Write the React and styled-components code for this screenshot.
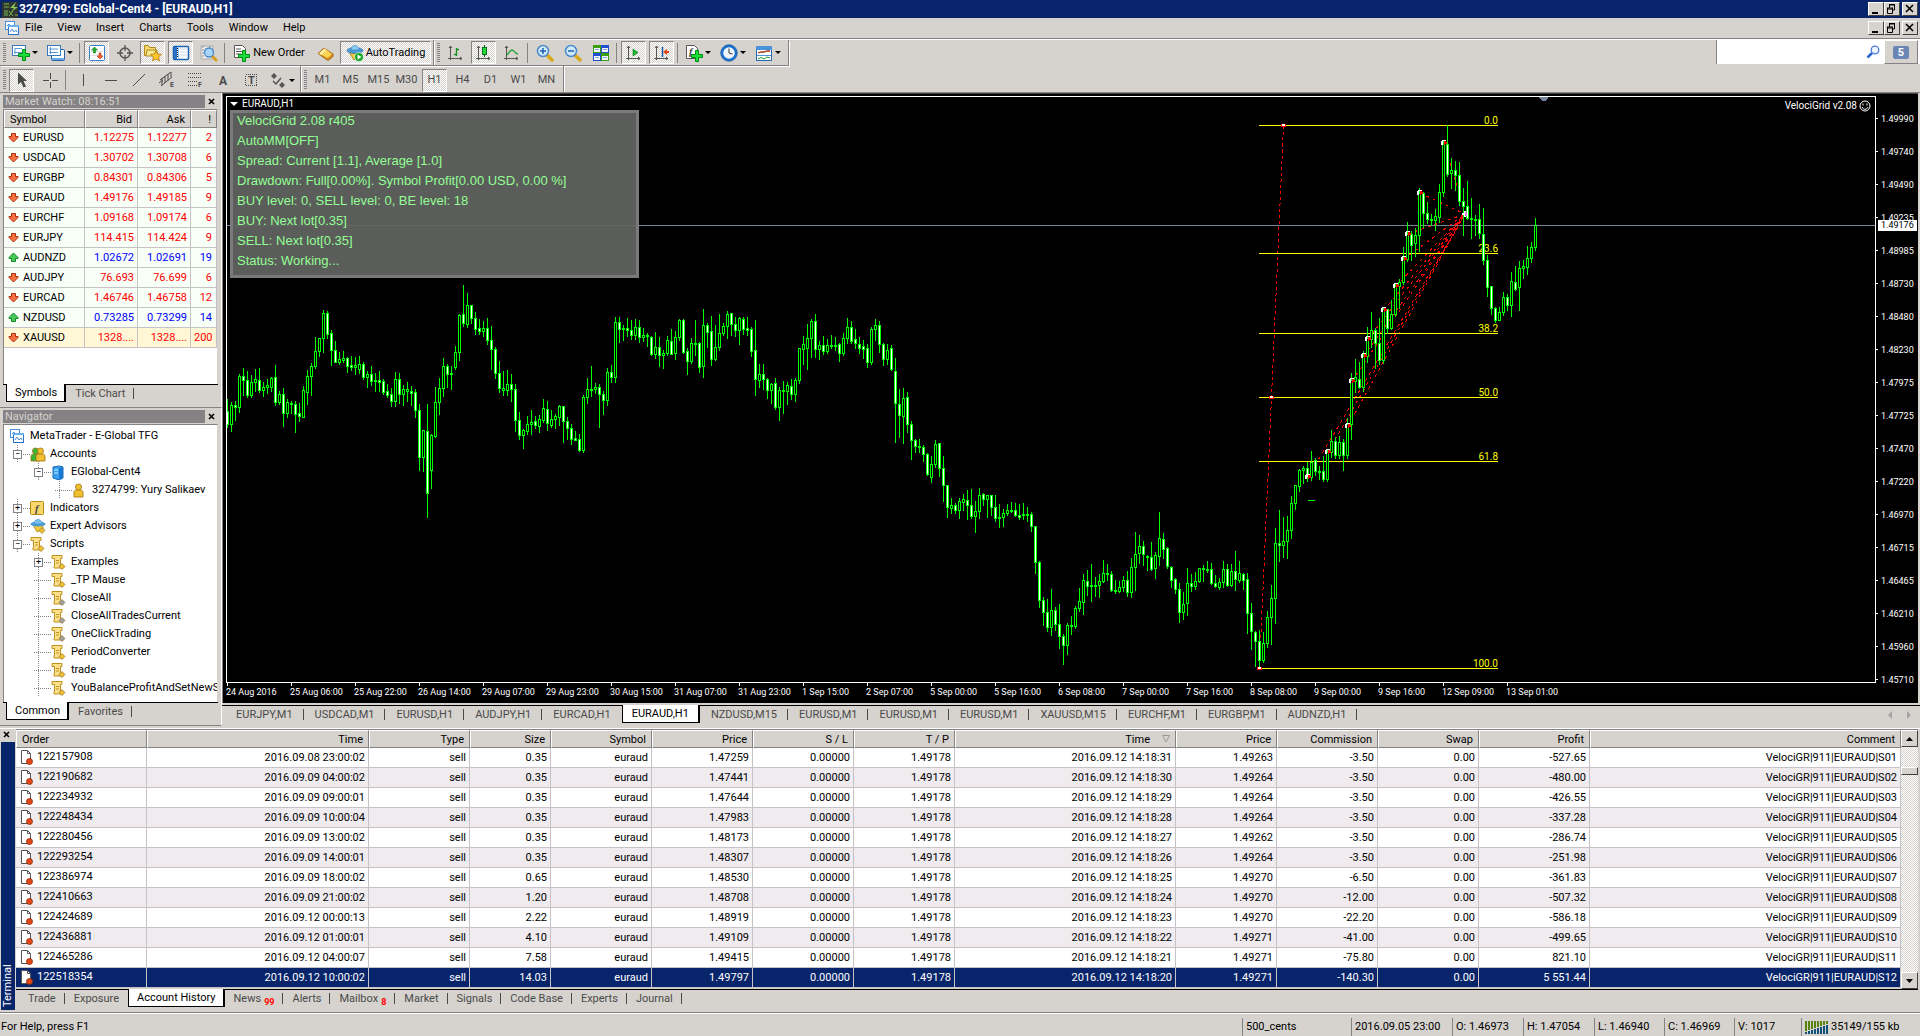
import React from "react";
import styled, { createGlobalStyle, css } from "styled-components";

const colors = {
  face: "#d6d3ce",
  shadow: "#848284",
  dark: "#424142",
  navy: "#08246b",
  lime: "#00ff00",
  line: "#c6c3c6",
  muted: "#4a4a4a",
};

const PRICES = [
  "1.49990", "1.49740", "1.49490", "1.49235", "1.48985", "1.48730",
  "1.48480", "1.48230", "1.47975", "1.47725", "1.47470", "1.47220",
  "1.46970", "1.46715", "1.46465", "1.46210", "1.45960", "1.45710",
];

const TIMES = [
  "24 Aug 2016", "25 Aug 06:00", "25 Aug 22:00", "26 Aug 14:00",
  "29 Aug 07:00", "29 Aug 23:00", "30 Aug 15:00", "31 Aug 07:00",
  "31 Aug 23:00", "1 Sep 15:00", "2 Sep 07:00", "5 Sep 00:00",
  "5 Sep 16:00", "6 Sep 08:00", "7 Sep 00:00", "7 Sep 16:00",
  "8 Sep 08:00", "9 Sep 00:00", "9 Sep 16:00", "12 Sep 09:00",
  "13 Sep 01:00",
];

// high, body top, body bottom, low, d = bearish / u = bullish
const CANDLES = `
399 411 424 427 d,402 405 424 431 u,401 405 407 420 d,374 376 407 412 u,368 376 380 395 d,371 380 395 397 d,
375 382 395 397 u,369 379 382 391 u,368 380 390 392 d,382 387 390 396 u,379 385 387 393 u,377 378 387 391 u,
365 377 402 405 d,391 394 402 404 u,388 394 413 426 d,399 402 413 417 u,401 403 404 413 u,401 404 414 432 d,
403 413 416 421 d,386 390 417 417 u,370 376 392 404 u,363 366 376 395 u,337 351 366 368 u,338 338 351 356 u,
310 313 338 352 u,311 313 334 338 d,330 333 350 365 d,341 350 362 362 d,352 359 362 364 u,351 358 360 362 u,
357 358 366 372 d,356 365 367 370 d,357 365 367 374 u,356 364 369 373 u,362 364 377 379 d,371 374 377 387 u,
366 374 381 385 d,373 380 381 391 d,371 380 382 391 d,379 381 392 394 d,384 391 395 397 d,388 394 401 406 d,
372 379 401 406 u,373 379 394 403 d,385 389 394 405 u,382 389 391 401 u,386 391 393 405 d,389 392 410 417 d,
404 410 457 470 d,430 430 457 471 u,404 431 493 517 d,434 435 470 488 u,387 402 436 437 u,378 388 402 414 u,
358 366 388 396 u,364 366 374 387 d,366 373 374 389 d,346 352 367 369 u,314 315 352 360 u,285 314 323 326 d,
293 305 324 327 u,305 305 318 323 d,312 318 329 334 d,319 328 331 334 d,321 328 331 336 u,318 328 340 344 d,
326 340 349 369 d,347 349 373 378 d,361 373 388 392 d,371 388 390 395 u,370 384 390 395 u,374 384 389 401 d,
384 389 420 431 d,412 420 435 439 d,429 430 435 448 u,416 424 431 434 u,410 422 424 434 u,416 421 425 428 d,
415 419 426 432 u,399 408 420 422 u,401 409 423 430 d,410 419 425 427 u,414 416 419 428 u,405 406 417 425 u,
406 406 421 442 d,417 421 428 439 d,424 428 439 444 d,431 438 440 440 d,434 439 450 451 d,395 397 450 452 u,
378 389 397 403 u,366 389 390 396 u,383 387 389 393 u,384 387 394 427 d,391 394 400 414 d,368 372 400 405 u,
365 372 377 382 d,317 322 377 382 u,317 322 329 342 d,325 328 329 340 d,318 328 330 336 d,320 330 335 339 d,
319 327 335 339 u,320 327 337 342 d,328 335 337 341 u,333 335 336 346 u,336 337 354 355 d,332 347 354 358 u,
337 347 355 366 d,350 353 355 368 u,336 340 353 355 u,329 341 354 354 d,331 337 353 359 u,319 320 337 340 u,
319 320 352 353 d,348 351 361 374 d,338 343 361 363 u,320 343 344 355 u,342 343 367 372 d,309 325 366 377 u,
323 325 332 347 d,316 331 359 365 d,325 347 359 360 u,314 333 347 350 u,323 326 333 335 u,311 314 326 338 u,
313 313 324 335 d,317 324 330 336 d,317 318 330 344 u,317 319 329 334 d,317 328 330 335 d,327 329 351 356 d,
320 350 379 395 d,364 374 380 387 u,364 374 379 389 d,378 379 390 398 d,383 384 390 403 u,378 383 407 409 d,
387 390 407 420 u,381 390 391 413 u,382 385 391 404 u,379 386 394 399 d,378 380 394 401 u,348 348 380 383 u,
336 344 349 364 u,324 338 348 369 u,319 321 338 357 u,314 321 349 357 d,341 345 349 359 u,336 345 351 354 d,
339 345 351 353 u,335 345 346 348 u,337 345 346 350 d,343 344 353 361 d,333 338 353 355 u,318 327 338 343 u,
321 327 341 343 d,329 339 343 348 d,337 344 348 353 d,340 346 349 358 d,344 348 362 367 d,327 329 362 364 u,
319 325 329 340 u,321 325 344 352 d,343 344 359 365 d,344 350 359 364 u,345 348 369 370 d,358 371 403 442 d,
389 404 415 437 d,388 398 416 443 u,392 397 424 432 d,421 424 440 459 d,439 440 446 452 d,439 446 447 452 d,
445 447 454 461 d,453 454 474 475 d,456 464 477 482 u,440 444 464 467 u,443 443 468 476 d,456 468 485 501 d,
485 485 507 517 d,498 505 508 513 u,503 505 510 513 d,498 501 510 518 u,494 499 502 510 u,490 500 505 519 d,
489 505 516 518 d,501 511 516 532 u,488 495 511 518 u,493 494 499 505 d,495 495 499 517 u,495 495 507 515 d,
495 507 518 521 d,504 517 518 527 d,509 513 517 526 u,504 510 513 515 u,502 510 511 512 u,503 510 515 516 d,
504 515 517 519 d,503 514 515 519 u,507 514 515 521 d,512 514 526 531 d,526 526 562 573 d,561 562 600 607 d,
597 600 612 625 d,599 612 627 631 d,589 610 627 635 u,607 610 624 630 d,604 624 636 648 d,634 636 645 664 d,
623 625 645 654 u,616 625 626 634 u,606 608 626 628 u,588 601 608 611 u,574 580 602 614 u,570 581 586 595 d,
564 585 586 601 u,577 585 586 596 u,574 581 585 597 u,560 573 581 582 u,564 573 574 580 d,571 574 590 591 d,
580 590 591 593 d,581 587 591 592 u,576 580 587 591 u,571 580 592 596 d,558 567 592 597 u,532 554 567 590 u,
535 546 553 563 u,541 546 554 565 d,555 556 557 570 d,542 557 569 570 d,552 555 568 578 u,512 538 556 565 u,
533 539 549 558 d,547 548 566 568 d,566 567 580 587 d,578 579 589 593 d,583 589 612 622 d,592 604 612 619 u,
568 583 603 615 u,574 583 586 591 d,572 581 586 589 u,568 568 581 582 u,565 568 569 581 u,561 569 570 572 d,
563 569 583 584 d,575 583 586 587 d,578 582 587 589 u,561 569 582 587 u,564 569 585 586 d,564 571 585 586 u,
551 571 579 590 d,561 573 580 582 u,573 574 580 589 d,573 579 613 633 d,603 613 631 649 d,631 632 641 666 d,
630 641 660 669 d,632 643 660 662 u,611 617 643 647 u,585 598 617 644 u,528 543 598 623 u,510 543 545 561 d,
517 541 545 557 u,516 530 541 558 u,496 503 530 538 u,485 485 503 509 u,469 470 486 491 u,466 468 470 483 u,
462 468 477 481 d,451 462 477 480 u,458 460 471 475 d,466 471 472 479 d,456 471 479 481 d,449 452 479 481 u,
430 441 452 457 u,437 441 455 458 d,436 442 455 458 u,439 442 455 470 d,418 424 455 458 u,373 380 424 439 u,
359 377 381 392 u,362 379 387 388 d,351 356 387 391 u,327 338 356 362 u,312 330 339 347 u,328 330 343 368 d,
318 343 360 364 d,308 309 360 363 u,309 309 328 333 d,300 314 328 329 u,283 286 314 316 u,279 282 286 308 u,
247 259 282 284 u,222 234 259 261 u,231 234 245 260 d,228 235 243 256 u,188 193 235 251 u,192 193 213 227 d,
202 213 219 223 d,214 219 220 225 d,209 216 220 230 u,184 192 217 222 u,141 144 192 196 u,125 144 174 176 d,
158 170 173 188 u,161 170 175 190 d,162 175 201 205 d,188 201 206 235 d,181 206 218 219 d,198 218 219 238 d,
215 219 220 235 d,204 219 233 238 d,208 234 260 264 d,255 260 287 296 d,286 286 308 314 d,307 308 320 322 d,
307 312 320 320 u,292 297 312 315 u,294 297 305 310 d,272 281 305 316 u,266 282 289 290 d,261 268 287 310 u,
260 266 268 278 u,246 258 267 274 u,242 247 258 262 u,218 225 247 250 u`
  .trim()
  .split(",")
  .map((c) => c.trim().split(" "))
  .map(([h, t, b, l, dir]) => ({ h: +h, t: +t, b: +b, l: +l, down: dir === "d" }));

const FIBO = [
  [125, "0.0"],
  [253, "23.6"],
  [333, "38.2"],
  [397, "50.0"],
  [461, "61.8"],
  [668, "100.0"],
];

const ENTRIES = [
  [1444, 143], [1420, 193], [1408, 234], [1404, 259], [1396, 286], [1384, 310],
  [1368, 339], [1364, 356], [1352, 381], [1348, 426], [1328, 452], [1308, 477],
];

const QUOTES = [
  ["EURUSD", "1.12275", "1.12277", "2"],
  ["USDCAD", "1.30702", "1.30708", "6"],
  ["EURGBP", "0.84301", "0.84306", "5"],
  ["EURAUD", "1.49176", "1.49185", "9"],
  ["EURCHF", "1.09168", "1.09174", "6"],
  ["EURJPY", "114.415", "114.424", "9"],
  ["AUDNZD", "1.02672", "1.02691", "19", true],
  ["AUDJPY", "76.693", "76.699", "6"],
  ["EURCAD", "1.46746", "1.46758", "12"],
  ["NZDUSD", "0.73285", "0.73299", "14", true],
  ["XAUUSD", "1328....", "1328....", "200"],
];

const ORDERS = [
  ["122157908", "2016.09.08 23:00:02", "0.35", "1.47259", "31", "1.49263", "-3.50", "-527.65"],
  ["122190682", "2016.09.09 04:00:02", "0.35", "1.47441", "30", "1.49264", "-3.50", "-480.00"],
  ["122234932", "2016.09.09 09:00:01", "0.35", "1.47644", "29", "1.49264", "-3.50", "-426.55"],
  ["122248434", "2016.09.09 10:00:04", "0.35", "1.47983", "28", "1.49264", "-3.50", "-337.28"],
  ["122280456", "2016.09.09 13:00:02", "0.35", "1.48173", "27", "1.49262", "-3.50", "-286.74"],
  ["122293254", "2016.09.09 14:00:01", "0.35", "1.48307", "26", "1.49264", "-3.50", "-251.98"],
  ["122386974", "2016.09.09 18:00:02", "0.65", "1.48530", "25", "1.49270", "-6.50", "-361.83"],
  ["122410663", "2016.09.09 21:00:02", "1.20", "1.48708", "24", "1.49270", "-12.00", "-507.32"],
  ["122424689", "2016.09.12 00:00:13", "2.22", "1.48919", "23", "1.49270", "-22.20", "-586.18"],
  ["122436881", "2016.09.12 01:00:01", "4.10", "1.49109", "22", "1.49271", "-41.00", "-499.65"],
  ["122465286", "2016.09.12 04:00:07", "7.58", "1.49415", "21", "1.49271", "-75.80", "821.10"],
  ["122518354", "2016.09.12 10:00:02", "14.03", "1.49797", "20", "1.49271", "-140.30", "5 551.44"],
];

const ORDER_COLUMNS = [
  ["Order", 131], ["Time", 222], ["Type", 101], ["Size", 81], ["Symbol", 101],
  ["Price", 101], ["S / L", 101], ["T / P", 101], ["Time", 221], ["Price", 101],
  ["Commission", 101], ["Swap", 101], ["Profit", 111], ["Comment", null],
];

const CHART_TABS = [
  "EURJPY,M1", "USDCAD,M1", "EURUSD,H1", "AUDJPY,H1", "EURCAD,H1", "EURAUD,H1",
  "NZDUSD,M15", "EURUSD,M1", "EURUSD,M1", "EURUSD,M1", "XAUUSD,M15", "EURCHF,M1",
  "EURGBP,M1", "AUDNZD,H1",
];

const TERMINAL_TABS = [
  ["Trade"], ["Exposure"], ["Account History"], ["News", "99"], ["Alerts"],
  ["Mailbox", "8"], ["Market"], ["Signals"], ["Code Base"], ["Experts"], ["Journal"],
];

const INFO_LINES = [
  "VelociGrid 2.08 r405",
  "AutoMM[OFF]",
  "Spread: Current [1.1], Average [1.0]",
  "Drawdown: Full[0.00%]. Symbol Profit[0.00 USD, 0.00 %]",
  "BUY level: 0, SELL level: 0, BE level: 18",
  "BUY: Next lot[0.35]",
  "SELL: Next lot[0.35]",
  "Status: Working...",
];

/* ---------- icons ---------- */

function Svg({ w = 18, h = 18, children }) {
  return (
    <svg width={w} height={h} viewBox={`0 0 ${w} ${h}`} aria-hidden="true">
      {children}
    </svg>
  );
}

const Plus = ({ x = 0, y = 0 }) => (
  <path
    transform={`translate(${x} ${y})`}
    d="M4.5.5h3v4h4v3h-4v4h-3v-4h-4v-3h4z"
    fill="#18e038"
    stroke="#008a10"
  />
);

const Axes = () => (
  <path d="M3.5 2v14M1 14.5h14M2 4l1.500-2 1.500 2M13 13l2 1.500-2 1.500" fill="none" stroke="#555" />
);

const icons = {
  newChart: (
    <Svg>
      <rect x=".5" y="1.500" width="13" height="10" fill="#fff" stroke="#3a7ab8" />
      <path d="M3 4v6M2 8.500h9M3 4.500h7" stroke="#5a9ad8" />
      <Plus x={6} y={5} />
    </Svg>
  ),
  profiles: (
    <Svg>
      <rect x="4.500" y="5.500" width="13" height="11" rx="1" fill="#fff" stroke="#2a62a8" />
      <path d="M5 14h12v2H5z" fill="#6aa8e8" />
      <rect x=".5" y="1.500" width="13" height="10" fill="#fff" stroke="#3a7ab8" />
      <path d="M3.500 3v7M2 8.500h9M2 5h9" stroke="#5a9ad8" />
    </Svg>
  ),
  marketWatch: (
    <Svg>
      <rect x="1.500" y="1.500" width="15" height="15" rx="1" fill="#fff" stroke="#3a80c8" />
      <path d="M3 7.500h12M3 11.500h12" stroke="#ddd" />
      <path d="M6.500 3l3 3H7.500v3h-2V6h-2z" fill="#20b030" stroke="#108018" strokeWidth=".6" />
      <path d="M12 15l-3-3h2V9h2v3h2z" fill="#f06030" stroke="#b83010" strokeWidth=".6" />
    </Svg>
  ),
  target: (
    <Svg>
      <circle cx="9" cy="9" r="5" fill="none" stroke="#555" strokeWidth="1.500" />
      <path d="M9 1v6M9 11v6M1 9h6M11 9h6" stroke="#555" strokeWidth="1.300" />
    </Svg>
  ),
  favorites: (
    <Svg>
      <path d="M.5 11.500V1.500h4l1 2h6v8z" fill="#f4d868" stroke="#b08820" />
      <path d="M3 6h10v6H2z" fill="#fae890" stroke="#b08820" />
      <path
        d="M12 6.500l1.600 3.500 3.900.4-2.900 2.600.9 3.900-3.500-2-3.500 2 .9-3.900-2.900-2.600 3.900-.4z"
        fill="#ffc828"
        stroke="#b07810"
        strokeWidth=".8"
      />
    </Svg>
  ),
  dataWindow: (
    <Svg>
      <rect x="1.500" y="2.500" width="15" height="13" rx="1" fill="#fff" stroke="#1a62b8" strokeWidth="1.500" />
      <path d="M2 3h3v12H2z" fill="#2a72c8" />
      <path d="M5.500 4v10" stroke="#222" strokeDasharray="1 1" />
      <path d="M6 3h1v12H6z" fill="#9ac8f4" />
      <path d="M8 5h7M8 8h7M8 11h7" stroke="#ccd8e8" />
    </Svg>
  ),
  tester: (
    <Svg>
      <path d="M1 2h12v13H1z" fill="#f0f0f0" stroke="#aaa" />
      <path d="M3 2v11M6 4v8M10 2v4" stroke="#888" strokeDasharray="2 1" />
      <path d="M12 12l4 4" stroke="#d8a018" strokeWidth="3" strokeLinecap="round" />
      <circle cx="9" cy="8.500" r="4.500" fill="#a8d4f8" stroke="#4a8ac8" strokeWidth="1.300" />
    </Svg>
  ),
  newOrder: (
    <Svg>
      <path d="M1.500 1.500h8l3 3v9h-11z" fill="#fff" stroke="#555" />
      <path d="M3 5h5M3 7.500h7M3 10h5" stroke="#555" />
      <Plus x={5} y={6} />
    </Svg>
  ),
  gold: (
    <Svg>
      <path d="M2 9.500L8 4l9 6v2.500l-5 4z" fill="#d89018" stroke="#905808" strokeWidth=".8" />
      <path d="M3 9.500L8.500 4.500l7.500 5.500-4.500 4z" fill="#fcd458" />
      <path d="M3 9.500L8.500 4.500l2 1.500L5 11z" fill="#fff0a8" />
    </Svg>
  ),
  autoTrading: (
    <Svg>
      <path d="M3 8l5 8 6-4-1-5z" fill="#f4c838" stroke="#a87810" strokeWidth=".8" />
      <ellipse cx="9" cy="6.500" rx="8" ry="3" fill="#4a9ad8" stroke="#2868a8" strokeWidth=".6" />
      <path d="M5 6c0-6 8-6 8 0z" fill="#8accf4" stroke="#3a80c0" strokeWidth=".6" />
      <circle cx="13" cy="13" r="4.500" fill="#18a828" stroke="#fff" strokeWidth=".6" />
      <path d="M11.500 10.500v5l4-2.500z" fill="#fff" />
    </Svg>
  ),
  bars: (
    <Svg>
      <Axes />
      <path d="M9.500 4v8M7 10.500h2.500M9.500 5.500H12" stroke="#109020" strokeWidth="1.300" fill="none" />
    </Svg>
  ),
  candles: (
    <Svg>
      <Axes />
      <path d="M9.500 1v12" stroke="#085810" />
      <rect x="7.500" y="3.500" width="4" height="7" fill="#20d838" stroke="#087018" />
    </Svg>
  ),
  lineChart: (
    <Svg>
      <Axes />
      <path d="M4 11c2-2 3-5 5-5s3 4 6 4" stroke="#20a030" strokeWidth="1.300" fill="none" />
    </Svg>
  ),
  zoomIn: (
    <Svg>
      <path d="M11 11l5 5" stroke="#d8a818" strokeWidth="3.500" strokeLinecap="round" />
      <circle cx="7" cy="7" r="5.500" fill="#d0eafc" stroke="#4a8ac8" strokeWidth="1.500" />
      <path d="M7 4v6M4 7h6" stroke="#1a62b0" strokeWidth="1.500" />
    </Svg>
  ),
  zoomOut: (
    <Svg>
      <path d="M11 11l5 5" stroke="#d8a818" strokeWidth="3.500" strokeLinecap="round" />
      <circle cx="7" cy="7" r="5.500" fill="#d0eafc" stroke="#4a8ac8" strokeWidth="1.500" />
      <path d="M4 7h6" stroke="#1a62b0" strokeWidth="1.500" />
    </Svg>
  ),
  tile: (
    <Svg>
      <path d="M1 1h8v8H1zM9 9h8v8H9z" fill="#3aa010" />
      <path d="M9 1h8v8H9zM1 9h8v8H1z" fill="#2050d0" />
      <path d="M2 4h6v4H2zM10 4h6v4h-6zM2 12h6v4H2zM10 12h6v4h-6z" fill="#f4f8ff" />
      <path d="M3 5.500h4M11 5.500h4M3 13.500h4M11 13.500h4" stroke="#88a8e0" />
    </Svg>
  ),
  autoScroll: (
    <Svg>
      <Axes />
      <path d="M8 5v7l5-3.500z" fill="#18b828" stroke="#087818" strokeWidth=".6" />
    </Svg>
  ),
  shift: (
    <Svg>
      <Axes />
      <path d="M9.500 3v10" stroke="#1858a0" strokeWidth="1.500" />
      <path d="M10 8l4-3v2h2v2h-2v2z" fill="#d84810" />
    </Svg>
  ),
  indicators: (
    <Svg>
      <path d="M1.500 1.500h8l3 3v10h-11z" fill="#fff" stroke="#555" />
      <IconText x="4" y="11" $size={11} $italic>f</IconText>
      <Plus x={6} y={6} />
    </Svg>
  ),
  clock: (
    <Svg>
      <circle cx="9" cy="9" r="7" fill="#eef6fc" stroke="#1a72d0" strokeWidth="2.500" />
      <circle cx="9" cy="9" r="8.300" fill="none" stroke="#0c4890" strokeWidth=".6" />
      <path d="M9 4.500V9l3.500 1" stroke="#333" fill="none" />
    </Svg>
  ),
  template: (
    <Svg>
      <rect x="1.500" y="2.500" width="15" height="14" fill="#fff" stroke="#2a6ab0" />
      <path d="M1 2h16v4H1z" fill="#4a92dc" />
      <path d="M3 9l3-1h3l3-1h3" stroke="#a03010" fill="none" strokeWidth="1.300" />
      <path d="M2 11.500h14" stroke="#4a92dc" />
      <path d="M3 15l3-1.500 3 1.500 3-2 3 1" stroke="#20a030" fill="none" />
    </Svg>
  ),
  cursor: (
    <Svg>
      <path d="M5 1.500v12l3-2.500 2.500 5.500 2.500-1-2.500-5.500H14z" fill="#4a4a4a" />
    </Svg>
  ),
  cross: (
    <Svg>
      <path d="M9.500 2v6M9.500 11v6M2 9.500h6M11 9.500h6" stroke="#4a4a4a" shapeRendering="crispEdges" />
    </Svg>
  ),
  vline: (
    <Svg>
      <path d="M9.500 3v12" stroke="#4a4a4a" shapeRendering="crispEdges" />
    </Svg>
  ),
  hline: (
    <Svg>
      <path d="M3 9.500h12" stroke="#4a4a4a" shapeRendering="crispEdges" />
    </Svg>
  ),
  trend: (
    <Svg>
      <path d="M3 15L15 3" stroke="#4a4a4a" />
    </Svg>
  ),
  channel: (
    <Svg>
      <path d="M2 9L13 1M3 15L14 6M4 7v7M7 5v7M10 3v7M1 12l4-3M13 1v5" stroke="#4a4a4a" />
      <IconText x="12" y="16" $size={7}>E</IconText>
    </Svg>
  ),
  fibo: (
    <Svg>
      <path d="M2 2.500h14M2 6.500h14M2 10.500h9M2 14.500h9" stroke="#4a4a4a" strokeDasharray="1 1" shapeRendering="crispEdges" />
      <IconText x="12" y="16" $size={7}>F</IconText>
    </Svg>
  ),
  text: (
    <Svg>
      <IconText x="5" y="14" $size={12}>A</IconText>
    </Svg>
  ),
  label: (
    <Svg>
      <rect x="3.500" y="3.500" width="11" height="11" fill="none" stroke="#4a4a4a" strokeDasharray="1 1" shapeRendering="crispEdges" />
      <IconText x="6" y="13" $size={11}>T</IconText>
    </Svg>
  ),
  arrows: (
    <Svg>
      <path d="M2 5l3-3 3 3-3 3zM10 14l3-3 3 3-3 3z" fill="#555" />
      <path d="M4 10l3 3 5-6" fill="none" stroke="#555" strokeWidth="1.500" />
    </Svg>
  ),
};

const ArrowIcon = ({ up }) => (
  <Svg w={11} h={11}>
    {up ? (
      <path d="M5.500 1L10 5.500v1H7.500V9.500h-4V6.500H1v-1z" fill="#48c858" stroke="#108828" />
    ) : (
      <path d="M5.500 10L1 5.500v-1h2.500V1.500h4V4.500H10v1z" fill="#f87040" stroke="#a83010" />
    )}
  </Svg>
);

const TerminalIcon = () => (
  <Svg w={14} h={14}>
    <rect x=".5" y=".5" width="9" height="8" fill="#fff" stroke="#4a90e0" />
    <path d="M2 5l2-2 2 3" stroke="#4a90e0" fill="none" />
    <rect x="3.500" y="4.500" width="10" height="9" fill="#fff" stroke="#2a70d0" />
    <path d="M3 4h11v2H3z" fill="#6ab0f4" />
    <path d="M5 11l2-3 2 3 2-2 1 2" stroke="#4a90e0" fill="none" />
  </Svg>
);

const Person = ({ x = 0, fill = "#f0c030" }) => (
  <g transform={`translate(${x} 0)`}>
    <path d="M1 14V9c0-3 9-3 9 0v5z" fill={fill} stroke="#a07010" strokeWidth=".8" />
    <circle cx="5.500" cy="4" r="3" fill={fill} stroke="#a07010" strokeWidth=".8" />
  </g>
);

const Scroll = ({ tip = "#f0c030" }) => (
  <Svg w={15} h={15}>
    <path d="M1 .500h10v3H9.500v7H12V13H3v-2.500h.5v-7H1z" fill="#fae088" stroke="#c09020" />
    <path d="M5 5.500h3M5 8h3" stroke="#c09020" />
    <path d="M11 8.500l3 3-3 3-3-3z" fill={tip} stroke="#907030" strokeWidth=".7" />
  </Svg>
);

const treeIcons = {
  root: <TerminalIcon />,
  accounts: (
    <Svg w={16} h={15}>
      <Person fill="#38b838" />
      <Person x={5} />
    </Svg>
  ),
  server: (
    <Svg w={14} h={15}>
      <path d="M2 2l6-1 4 1v11l-4 2-6-2z" fill="#38a0f0" stroke="#1868b0" />
      <path d="M8 3v12l4-2V2z" fill="#1878d0" />
      <path d="M3 5h4M3 8h4" stroke="#d0ecff" />
    </Svg>
  ),
  user: (
    <Svg w={14} h={15}>
      <Person x={1} />
    </Svg>
  ),
  indicators: (
    <Svg w={15} h={15}>
      <rect x=".5" y=".5" width="13" height="13" rx="1" fill="#f8d868" stroke="#b88818" />
      <IconText x="5" y="11" $size={11} $italic>f</IconText>
    </Svg>
  ),
  experts: (
    <Svg w={16} h={15}>
      <path d="M3 6l4 7 6-3V6z" fill="#f4c838" stroke="#a87810" strokeWidth=".7" />
      <ellipse cx="8" cy="5" rx="7.500" ry="2.500" fill="#4aa0d8" />
      <path d="M4 5c0-6 8-6 8 0z" fill="#78c4f0" stroke="#3a80c0" strokeWidth=".6" />
      <path d="M12 8.500l3 3-3 3-3-3z" fill="#f0c030" stroke="#907030" strokeWidth=".7" />
    </Svg>
  ),
  script: <Scroll />,
  scriptGray: <Scroll tip="#a0a0a0" />,
};

const OrderIcon = () => (
  <Svg w={15} h={17}>
    <path d="M2.500 1.500h6l3 3v10h-9z" fill="#fff" stroke="#555" />
    <path d="M8.500 1.500v3h3" fill="none" stroke="#555" />
    <circle cx="10.500" cy="12.500" r="3" fill="#e04818" stroke="#902808" strokeWidth=".8" />
  </Svg>
);

/* ---------- page ---------- */

const TREE = [
  { icon: "accounts", label: "Accounts", level: 1, box: "−" },
  { icon: "server", label: "EGlobal-Cent4", level: 2, box: "−" },
  { icon: "user", label: "3274799: Yury Salikaev", level: 3 },
  { icon: "indicators", label: "Indicators", level: 1, box: "+" },
  { icon: "experts", label: "Expert Advisors", level: 1, box: "+" },
  { icon: "script", label: "Scripts", level: 1, box: "−" },
  { icon: "script", label: "Examples", level: 2, box: "+" },
  { icon: "script", label: "_TP Mause", level: 2 },
  { icon: "scriptGray", label: "CloseAll", level: 2 },
  { icon: "scriptGray", label: "CloseAllTradesCurrent", level: 2 },
  { icon: "scriptGray", label: "OneClickTrading", level: 2 },
  { icon: "script", label: "PeriodConverter", level: 2 },
  { icon: "script", label: "trade", level: 2 },
  { icon: "script", label: "YouBalanceProfitAndSetNewSt", level: 2 },
];

function Tool({ icon, label, pressed, drop }) {
  return (
    <ToolButton type="button" aria-label={label} $pressed={pressed} $width={drop ? 32 : 25}>
      {icons[icon]}
      {drop && <DropArrow />}
    </ToolButton>
  );
}

function WindowButtons() {
  return (
    <WindowControls>
      <WindowButton type="button" aria-label="Minimize">
        <Svg w={12} h={10}>
          <path d="M2 8h6v2H2z" />
        </Svg>
      </WindowButton>
      <WindowButton type="button" aria-label="Restore">
        <Svg w={12} h={10}>
          <path d="M3 1h6M3 .5h6M3.500 1v3M8.500 1v5H7M1 4h6M1 5h6M1.500 4v5.500h5V4" fill="none" stroke="#000" />
        </Svg>
      </WindowButton>
      <WindowButton type="button" aria-label="Close" $apart>
        <Svg w={12} h={10}>
          <path d="M2 1l7 7M9 1L2 8" stroke="#000" strokeWidth="1.600" />
        </Svg>
      </WindowButton>
    </WindowControls>
  );
}

function Toolbars() {
  return (
    <ToolbarArea>
      <ToolbarRow>
        <Toolbar>
          <Handle />
          <Tool icon="newChart" label="New chart" drop />
          <Tool icon="profiles" label="Profiles" drop />
          <Divider />
          <Tool icon="marketWatch" label="Market Watch" pressed />
          <Tool icon="target" label="Crosshair data" />
          <Tool icon="favorites" label="Navigator" pressed />
          <Tool icon="dataWindow" label="Terminal" pressed />
          <Tool icon="tester" label="Strategy Tester" />
          <Divider />
          <ToolButton type="button" $width={80}>
            {icons.newOrder}
            <span>New Order</span>
          </ToolButton>
          <Tool icon="gold" label="MetaEditor" />
          <ToolButton type="button" $width={91} $pressed>
            {icons.autoTrading}
            <span>AutoTrading</span>
          </ToolButton>
        </Toolbar>
        <Toolbar>
          <Handle />
          <Tool icon="bars" label="Bar chart" />
          <Tool icon="candles" label="Candlesticks" pressed />
          <Tool icon="lineChart" label="Line chart" />
          <Divider />
          <Tool icon="zoomIn" label="Zoom in" />
          <Tool icon="zoomOut" label="Zoom out" />
          <Tool icon="tile" label="Tile windows" />
          <Divider />
          <Tool icon="autoScroll" label="Auto scroll" pressed />
          <Tool icon="shift" label="Chart shift" pressed />
          <Divider />
          <Tool icon="indicators" label="Indicators" drop />
          <Tool icon="clock" label="Periods" drop />
          <Tool icon="template" label="Templates" drop />
        </Toolbar>
        <SearchArea>
          <SearchInput type="text" aria-label="Search" />
          <SearchIcon>
            <Svg w={14} h={14}>
              <path d="M1.500 12.500L6 8" stroke="#2a62d0" strokeWidth="2.500" />
              <circle cx="9" cy="5" r="3.800" fill="#f0f6ff" stroke="#4a7ad8" strokeWidth="1.300" />
            </Svg>
          </SearchIcon>
          <ChatButton type="button">
            <ChatBubble>5</ChatBubble>
          </ChatButton>
        </SearchArea>
      </ToolbarRow>
      <ToolbarRow $last>
        <Toolbar>
          <Handle />
          <Tool icon="cursor" label="Cursor" pressed />
          <Tool icon="cross" label="Crosshair" />
          <Divider />
          <Tool icon="vline" label="Vertical line" />
          <Tool icon="hline" label="Horizontal line" />
          <Tool icon="trend" label="Trendline" />
          <Tool icon="channel" label="Equidistant channel" />
          <Tool icon="fibo" label="Fibonacci retracement" />
          <Tool icon="text" label="Text" />
          <Tool icon="label" label="Text label" />
          <Tool icon="arrows" label="Arrows" drop />
        </Toolbar>
        <Toolbar>
          <Handle />
          {["M1", "M5", "M15", "M30", "H1", "H4", "D1", "W1", "MN"].map((p) => (
            <PeriodButton type="button" key={p} $width={25} $pressed={p === "H1"}>
              {p}
            </PeriodButton>
          ))}
        </Toolbar>
      </ToolbarRow>
    </ToolbarArea>
  );
}

function MarketWatch() {
  return (
    <Panel $height={315}>
      <PanelTitle title="Market Watch: 08:16:51" />
      <PanelBox>
        <QuoteTable>
          <thead>
            <tr>
              <th>Symbol</th>
              <th>Bid</th>
              <th>Ask</th>
              <th>!</th>
            </tr>
          </thead>
          <tbody>
            {QUOTES.map(([symbol, bid, ask, spread, up]) => (
              <QuoteRow key={symbol} $up={up} $gold={symbol === "XAUUSD"}>
                <td>
                  <ArrowIcon up={up} />
                  {symbol}
                </td>
                <td>{bid}</td>
                <td>{ask}</td>
                <td>{spread}</td>
              </QuoteRow>
            ))}
          </tbody>
        </QuoteTable>
      </PanelBox>
      <TabBar>
        <Tab type="button" $active>Symbols</Tab>
        <Tab type="button">Tick Chart</Tab>
      </TabBar>
    </Panel>
  );
}

function PanelTitle({ title }) {
  return (
    <PanelHead>
      <PanelName>{title}</PanelName>
      <CloseButton type="button" aria-label="Close panel">
        <CloseGlyph />
      </CloseButton>
    </PanelHead>
  );
}

const CloseGlyph = () => (
  <Svg w={7} h={7}>
    <path d="M1 1l5 5M6 1L1 6" stroke="#000" strokeWidth="1.600" />
  </Svg>
);

function Navigator() {
  return (
    <Panel>
      <PanelTitle title="Navigator" />
      <PanelBox>
        <Tree>
          <TreeRow $level={0}>
            {treeIcons.root}
            <span>MetaTrader - E-Global TFG</span>
          </TreeRow>
          {TREE.map(({ icon, label, level, box }) => (
            <TreeRow key={label} $level={level}>
              <Branch>{box && <Expander>{box}</Expander>}</Branch>
              <TreeIcon>{treeIcons[icon]}</TreeIcon>
              <span>{label}</span>
            </TreeRow>
          ))}
        </Tree>
      </PanelBox>
      <TabBar>
        <Tab type="button" $active>Common</Tab>
        <Tab type="button">Favorites</Tab>
      </TabBar>
    </Panel>
  );
}

function Candles() {
  const x = (i) => 227 + i * 4;
  const rect = (left, top, w, h) => `M${left} ${top}h${w}v${h}h${-w}z`;
  let outline = "";
  let hollow = "";
  let filled = "";

  CANDLES.forEach(({ h, t, b, l, down }, i) => {
    outline += rect(x(i), h, 1, l - h + 1) + rect(x(i) - 1, t, 3, b - t + 1);
    if (b - t < 2) return;
    const body = rect(x(i), t + 1, 1, b - t - 1);
    if (down) filled += body;
    else hollow += body;
  });

  return (
    <>
      <path d={outline} fill={colors.lime} />
      <path d={hollow} fill="#000" />
      <path d={filled} fill="#fff" />
    </>
  );
}

function Plot() {
  return (
    <PlotSvg width="1648" height="585" viewBox="227 97 1648 585" shapeRendering="crispEdges">
      <path d="M227 225.500h6000" stroke="#73849c" />
      <path d="M1539 97h9v1l-3 3h-3l-3-3z" fill="#73849c" />
      <path d="M1259.500 668L1271.500 397L1283.500 125" stroke="#f00" strokeDasharray="3 3" fill="none" />
      {ENTRIES.map(([ex, ey]) => (
        <path key={ey} d={`M${ex} ${ey}L1465 214`} stroke="#f00" strokeDasharray="3 4" />
      ))}
      {FIBO.map(([y, label]) => (
        <g key={label}>
          <path d={`M1259 ${y + 0.5}h239`} stroke="#ff0" />
          <FiboLabel x="1498" y={y - 1}>{label}</FiboLabel>
        </g>
      ))}
      <Candles />
      {ENTRIES.map(([ex, ey]) => (
        <g key={ey}>
          <path d={`M${ex - 3} ${ey - 2}h1v-1h4v1h-3v4h-2z`} fill="#fff" />
          <path d={`M${ex} ${ey - 2}h2v1h1v2h-2v1h-1z`} fill="#f00" />
        </g>
      ))}
      <path d="M1462 213h2v-2h2v6h-2v-2h-2z" fill="#fff" />
      <path d="M1465 212h2v4h-2z" fill="#e878e8" />
      {[[1259, 668], [1271, 397], [1283, 125]].map(([mx, my]) => (
        <g key={my}>
          <path d={`M${mx - 2} ${my - 1}h5v3h-5z`} fill="#f00" />
          <path d={`M${mx - 1} ${my - 1}h3v2h-3z`} fill="#fff" />
        </g>
      ))}
      <path d="M1308 500.500h7" stroke={colors.lime} />
    </PlotSvg>
  );
}

function Chart() {
  return (
    <ChartColumn>
      <ChartFrame>
        <PlotArea>
          <Plot />
          <ChartTitle>
            <TitleArrow />
            EURAUD,H1
          </ChartTitle>
          <ExpertName>
            VelociGrid v2.08
            <Svg w={12} h={12}>
              <circle cx="6" cy="6" r="5" fill="none" stroke="#fff" />
              <path d="M4 3.500v2M8 3.500v2M3 7c1 3 5 3 6 0" fill="none" stroke="#fff" />
            </Svg>
          </ExpertName>
          <InfoPanel>
            {INFO_LINES.map((line) => (
              <InfoLine key={line}>{line}</InfoLine>
            ))}
          </InfoPanel>
        </PlotArea>
        <PriceAxis>
          {PRICES.map((p) => (
            <PriceLabel key={p}>{p}</PriceLabel>
          ))}
          <CurrentPrice>1.49176</CurrentPrice>
        </PriceAxis>
        <TimeAxis>
          {TIMES.map((t) => (
            <TimeLabel key={t}>{t}</TimeLabel>
          ))}
        </TimeAxis>
      </ChartFrame>
      <ChartTabBar>
        {CHART_TABS.map((name, i) => (
          <Tab type="button" key={i} $wide $active={i === 5} $bare={i === 4}>
            {name}
          </Tab>
        ))}
        <TabScroll>
          <Svg w={24} h={8}>
            <path d="M4 0v8L0 4zM19 0v8l4-4z" fill="#a5a2a5" />
          </Svg>
        </TabScroll>
      </ChartTabBar>
    </ChartColumn>
  );
}

function Terminal() {
  return (
    <TerminalPane>
      <TerminalSide>
        <CloseButton type="button" aria-label="Close terminal">
          <CloseGlyph />
        </CloseButton>
        <SideTitle>Terminal</SideTitle>
      </TerminalSide>
      <TerminalMain>
        <TerminalBody>
          <OrderTable>
            <colgroup>
              {ORDER_COLUMNS.map(([, width], i) => (
                <Column key={i} $width={width} />
              ))}
            </colgroup>
            <thead>
              <tr>
                {ORDER_COLUMNS.map(([name], i) => (
                  <th key={i}>
                    {name}
                    {i === 8 && (
                      <SortMark>
                        <Svg w={8} h={8}>
                          <path d="M.5.500h7L4 7z" fill="none" stroke="#999" />
                        </Svg>
                      </SortMark>
                    )}
                  </th>
                ))}
              </tr>
            </thead>
            <tbody>
              {ORDERS.map(([id, time, size, open, sec, close, fee, profit], i) => (
                <OrderRow key={id} $selected={i === ORDERS.length - 1}>
                  <td>
                    <OrderIcon />
                    {id}
                  </td>
                  <td>{time}</td>
                  <td>sell</td>
                  <td>{size}</td>
                  <td>euraud</td>
                  <td>{open}</td>
                  <td>0.00000</td>
                  <td>1.49178</td>
                  <td>2016.09.12 14:18:{sec}</td>
                  <td>{close}</td>
                  <td>{fee}</td>
                  <td>0.00</td>
                  <td>{profit}</td>
                  <td>VelociGR|911|EURAUD|S{String(i + 1).padStart(2, "0")}</td>
                </OrderRow>
              ))}
            </tbody>
          </OrderTable>
          <ScrollBar>
            <ScrollButton type="button" aria-label="Scroll up">
              <Svg w={7} h={4}>
                <path d="M0 4h7L3.500 0z" />
              </Svg>
            </ScrollButton>
            <ScrollTrack>
              <ScrollThumb />
            </ScrollTrack>
            <ScrollButton type="button" aria-label="Scroll down">
              <Svg w={7} h={4}>
                <path d="M0 0h7L3.500 4z" />
              </Svg>
            </ScrollButton>
          </ScrollBar>
        </TerminalBody>
        <TabBar>
          {TERMINAL_TABS.map(([name, count]) => (
            <Tab
              type="button"
              key={name}
              $active={name === "Account History"}
              $bare={name === "Exposure"}
            >
              {name}
              {count && <Count>{count}</Count>}
            </Tab>
          ))}
        </TabBar>
      </TerminalMain>
    </TerminalPane>
  );
}

function StatusBar() {
  return (
    <Status>
      <Help>For Help, press F1</Help>
      <StatusCell $width={109}>500_cents</StatusCell>
      <StatusCell $width={101}>2016.09.05 23:00</StatusCell>
      <StatusCell $width={71}>O: 1.46973</StatusCell>
      <StatusCell $width={71}>H: 1.47054</StatusCell>
      <StatusCell $width={70}>L: 1.46940</StatusCell>
      <StatusCell $width={70}>C: 1.46969</StatusCell>
      <StatusCell $width={67}>V: 1017</StatusCell>
      <StatusCell $width={119}>
        <Svg w={23} h={13}>
          {[0, 1, 2, 3, 4, 5, 6, 7].map((n) => (
            <g key={n}>
              <path d={`M${n * 3} 0h2v${10 - n}h-2z`} fill="#5a8210" />
              <path d={`M${n * 3} ${11 - n}h2v${2 + n}h-2z`} fill="#10517b" />
            </g>
          ))}
        </Svg>
        35149/155 kb
      </StatusCell>
    </Status>
  );
}

export default function App() {
  return (
    <Window>
      <GlobalStyle />
      <TitleBar>
        <Svg w={17} h={17}>
          <path d="M0 1h16v16H0z" fill="#303830" />
          <path d="M14 1l-6 6h4l-3 4 7-5h-4z" fill="#8cc860" />
          <path d="M2 3h5M2 6h5M2 10h4M2 12h4M2 14h4M7 10l4 5M11 10l-4 5M13 14h3" stroke="#78b050" fill="none" />
        </Svg>
        <h1>3274799: EGlobal-Cent4 - [EURAUD,H1]</h1>
        <WindowButtons />
      </TitleBar>
      <MenuBar>
        <TerminalIcon />
        <MenuList>
          {["File", "View", "Insert", "Charts", "Tools", "Window", "Help"].map((m) => (
            <MenuItem type="button" key={m}>{m}</MenuItem>
          ))}
        </MenuList>
        <WindowButtons />
      </MenuBar>
      <Toolbars />
      <Workspace>
        <SideColumn>
          <MarketWatch />
          <Navigator />
        </SideColumn>
        <Chart />
      </Workspace>
      <Terminal />
      <StatusBar />
    </Window>
  );
}

/* ---------- styles ---------- */

const GlobalStyle = createGlobalStyle`
  * {
    box-sizing: border-box;
  }
  body {
    margin: 0;
    background: ${colors.face};
    color: #000;
    font: 11px/14px Roboto, "Liberation Sans", sans-serif;
  }
  button, input {
    font: inherit;
    color: inherit;
    margin: 0;
    padding: 0;
    border: 0;
    background: none;
  }
  svg {
    display: block;
    flex: none;
  }
`;

const raised = css`
  background: ${colors.face};
  border: 1px solid;
  border-color: #fff ${colors.dark} ${colors.dark} #fff;
`;
const checker = css`
  background: repeating-conic-gradient(#fff 0 25%, ${colors.face} 0 50%) 0 0 / 2px 2px;
`;

// function declaration so that the icon map above can use it
function IconText({ $size, $italic, ...rest }) {
  return <IconLetter $size={$size} $italic={$italic} {...rest} />;
}
const IconLetter = styled.text`
  fill: ${colors.muted};
  font-family: ${(p) => (p.$italic ? '"Liberation Serif", serif' : "Roboto, sans-serif")};
  font-size: ${(p) => p.$size}px;
  font-style: ${(p) => (p.$italic ? "italic" : "normal")};
  font-weight: 700;
`;

const Window = styled.div`
  display: flex;
  flex-direction: column;
  min-height: 100vh;
  min-width: 1100px;
`;

const TitleBar = styled.header`
  display: flex;
  align-items: center;
  height: 18px;
  padding: 0 2px 0 2px;
  background: ${colors.navy};
  color: #fff;
  h1 {
    flex: 1;
    margin: 0;
    font-size: 12px;
    font-weight: 700;
  }
`;
const WindowControls = styled.div`
  display: flex;
`;
const WindowButton = styled.button`
  ${raised}
  display: flex;
  align-items: center;
  justify-content: center;
  width: 16px;
  height: 14px;
  margin-left: ${(p) => (p.$apart ? 2 : 0)}px;
`;
const MenuBar = styled.nav`
  display: flex;
  align-items: center;
  height: 21px;
  padding: 0 2px 0 5px;
  border-bottom: 1px solid ${colors.shadow};
`;
const MenuList = styled.div`
  display: flex;
  flex: 1;
`;
const MenuItem = styled.button`
  padding: 2px 9px 2px 6px;
`;

const ToolbarArea = styled.div`
  border-top: 1px solid #fff;
  border-bottom: 1px solid ${colors.shadow};
`;
const Toolbar = styled.div`
  display: flex;
  align-items: center;
  gap: 3px;
  padding: 0 4px 0 3px;
  border-right: 1px solid ${colors.shadow};
  border-bottom: 1px solid ${colors.shadow};
  box-shadow: 1px 1px 0 #fff;
  &:first-child {
    padding-right: 2px;
  }
`;
const ToolbarRow = styled.div`
  display: flex;
  height: 26px;
  ${(p) =>
    p.$last &&
    css`
      ${Toolbar} {
        padding-top: 2px;
        border-bottom: 0;
        box-shadow: 1px 0 0 #fff;
      }
    `}
`;
const Handle = styled.span`
  width: 3px;
  height: 20px;
  background: repeating-linear-gradient(${colors.shadow} 0 1px, ${colors.face} 1px 2px);
`;
const Divider = styled.span`
  width: 2px;
  height: 20px;
  border-left: 1px solid ${colors.shadow};
`;
const ToolButton = styled.button`
  display: flex;
  align-items: center;
  justify-content: center;
  gap: 2px;
  width: ${(p) => p.$width}px;
  height: 23px;
  border: 1px solid transparent;
  white-space: nowrap;
  ${(p) =>
    p.$pressed &&
    css`
      ${checker}
      border-color: ${colors.shadow} #fff #fff ${colors.shadow};
    `}
`;
const PeriodButton = styled(ToolButton)`
  color: ${colors.muted};
`;
const DropArrow = styled.span`
  border: 3px solid transparent;
  border-top-color: #000;
  border-bottom: 0;
`;
const SearchArea = styled.div`
  display: flex;
  width: 204px;
  height: 24px;
  margin-left: auto;
  padding-right: 2px;
  background: #fff;
  border-left: 1px solid ${colors.shadow};
`;
const SearchInput = styled.input`
  flex: 1;
  min-width: 0;
  padding: 0 4px;
  outline: none;
`;
const SearchIcon = styled.span`
  align-self: center;
  margin-right: 4px;
`;
const ChatButton = styled.button`
  ${raised}
  width: 34px;
  border-color: #fff ${colors.shadow} ${colors.shadow} #fff;
  display: flex;
  align-items: center;
  justify-content: center;
`;
const ChatBubble = styled.span`
  width: 16px;
  height: 13px;
  border-radius: 2px;
  background: #6b86b5;
  color: #fff;
  font-weight: 700;
  line-height: 13px;
`;

const Workspace = styled.main`
  display: flex;
  flex: 1;
  min-height: 0;
`;
const SideColumn = styled.aside`
  display: flex;
  flex-direction: column;
  width: 222px;
  flex: none;
  padding-bottom: 2px;
`;
const Panel = styled.section`
  display: flex;
  flex-direction: column;
  height: ${(p) => (p.$height ? `${p.$height}px` : "auto")};
  flex: ${(p) => (p.$height ? "none" : 1)};
  min-height: 0;
  padding: 2px 3px 5px;
  border-right: 1px solid #fff;
  border-bottom: 1px solid ${colors.shadow};
`;
const PanelHead = styled.div`
  display: flex;
  height: 13px;
`;
const PanelName = styled.h2`
  flex: 1;
  margin: 0;
  padding-left: 2px;
  background: ${colors.shadow};
  color: ${colors.face};
  font-size: 11px;
  font-weight: 400;
  line-height: 13px;
`;
const CloseButton = styled.button`
  display: flex;
  align-items: center;
  justify-content: center;
  width: 13px;
`;
const PanelBox = styled.div`
  flex: 1;
  min-height: 0;
  overflow: hidden;
  margin-top: 1px;
  background: #fff;
  border: 1px solid ${colors.shadow};
  border-right-color: ${colors.face};
  border-bottom: 0;
`;

const tableBase = css`
  width: 100%;
  border-collapse: separate;
  border-spacing: 0;
  table-layout: fixed;
  th {
    height: 18px;
    padding: 1px 5px 0;
    background: ${colors.face};
    border: 1px solid;
    border-color: #fff ${colors.shadow} ${colors.shadow} #fff;
    font-weight: 400;
    text-align: right;
    line-height: 14px;
  }
  th:first-child {
    text-align: left;
  }
  td {
    height: 20px;
    padding: 0 3px;
    border-right: 1px solid ${colors.line};
    border-bottom: 1px solid ${colors.line};
    text-align: right;
    line-height: 16px;
    white-space: nowrap;
  }
  td:first-child {
    text-align: left;
  }
  td svg {
    display: inline-block;
    vertical-align: middle;
  }
`;
const QuoteTable = styled.table`
  ${tableBase}
  th:nth-child(1) {
    width: 81px;
  }
  th:nth-child(2),
  th:nth-child(3) {
    width: 53px;
  }
  td svg {
    margin: 0 4px 0 1px;
  }
`;
const QuoteRow = styled.tr`
  background: ${(p) => (p.$gold ? "#fff7d6" : "#f7fff7")};
  color: ${(p) => (p.$up ? "#00f" : "#f00")};
  td:first-child {
    color: #000;
  }
  td:last-child {
    padding-right: 4px;
  }
`;

const TabBar = styled.div`
  display: flex;
  height: 18px;
  padding-left: 3px;
  border-top: 1px solid #000;
`;
const Tab = styled.button`
  position: relative;
  height: 17px;
  padding: 0 9px;
  color: ${(p) => (p.$active ? "#000" : colors.muted)};
  line-height: 16px;
  white-space: nowrap;
  &::after {
    content: "";
    position: absolute;
    right: 0;
    top: 3px;
    height: 11px;
    border-right: ${(p) => (p.$active || p.$bare ? 0 : 1)}px solid ${colors.muted};
  }
  ${(p) =>
    p.$active &&
    css`
      height: 18px;
      margin-top: -1px;
      padding: 0 7px 0 8px;
      background: #fff;
      border: 1px solid #000;
      border-top: 0;
      border-right-width: 2px;
    `}
  ${(p) =>
    p.$wide &&
    css`
      padding: 0 ${p.$active ? 9 : 11}px;
    `}
`;

const Tree = styled.ul`
  margin: 0;
  padding: 2px 0 0;
  list-style: none;
`;
const TreeRow = styled.li`
  display: flex;
  align-items: center;
  height: 18px;
  padding-left: ${(p) => (p.$level ? p.$level * 21 - 12 : 6)}px;
  white-space: nowrap;
  > span {
    flex: none;
  }
  > span:last-child {
    margin-left: ${(p) => (p.$level ? 4 : 6)}px;
  }
`;
const Branch = styled.span`
  display: flex;
  align-items: center;
  width: 17px;
  height: 18px;
  background: linear-gradient(90deg, ${colors.shadow} 50%, transparent 0) 4px 9px / 2px 1px repeat-x,
    linear-gradient(${colors.shadow} 50%, transparent 0) 4px 0 / 1px 2px repeat-y;
`;
const Expander = styled.span`
  width: 9px;
  height: 9px;
  border: 1px solid ${colors.shadow};
  background: #fff;
  font-size: 9px;
  line-height: 7px;
  text-align: center;
`;
const TreeIcon = styled.span`
  width: 16px;
`;

const ChartColumn = styled.section`
  display: flex;
  flex-direction: column;
  flex: 1;
  min-width: 0;
`;
const ChartFrame = styled.div`
  display: grid;
  grid-template-columns: minmax(0, 1fr) 42px;
  grid-template-rows: minmax(0, 1fr) 20px;
  flex: 1;
  padding: 2px 0 0 3px;
  margin-right: 2px;
  background: #000;
  color: #fff;
  border-top: 1px solid ${colors.dark};
  border-left: 1px solid ${colors.shadow};
  font-size: 9px;
`;
const PlotArea = styled.div`
  position: relative;
  overflow: hidden;
  border: 1px solid #fff;
`;
const PlotSvg = styled.svg`
  position: absolute;
  top: 0;
  left: 0;
`;
const FiboLabel = styled.text`
  fill: #ff0;
  font-size: 10px;
  text-anchor: end;
`;
const ChartTitle = styled.div`
  position: absolute;
  top: 0;
  left: 3px;
  display: flex;
  align-items: center;
  gap: 4px;
  font-size: 10px;
`;
const TitleArrow = styled.span`
  border: 4px solid transparent;
  border-top-color: #fff;
  border-bottom: 0;
`;
const ExpertName = styled.div`
  position: absolute;
  top: 2px;
  right: 4px;
  display: flex;
  align-items: center;
  gap: 2px;
  font-size: 10px;
`;
const InfoPanel = styled.div`
  position: absolute;
  top: 13px;
  left: 3px;
  width: 409px;
  height: 168px;
  padding-left: 4px;
  background: rgba(97, 100, 97, 0.93);
  border: 3px solid #7b797b;
  color: #94ff94;
  font: 13px/20px "Liberation Sans", sans-serif;
`;
const InfoLine = styled.p`
  margin: 0;
  height: 20px;
  line-height: 15px;
`;
const PriceAxis = styled.div`
  position: relative;
  grid-row: 1 / 3;
  grid-column: 2;
  padding-top: 6px;
`;
const PriceLabel = styled.div`
  display: flex;
  align-items: center;
  gap: 3px;
  height: 33px;
  &::before {
    content: "";
    width: 2px;
    height: 1px;
    background: #fff;
  }
`;
const CurrentPrice = styled.div`
  position: absolute;
  top: 124px;
  left: 2px;
  width: 39px;
  height: 11px;
  padding-left: 3px;
  background: #fff;
  color: #000;
  line-height: 11px;
`;
const TimeAxis = styled.div`
  display: flex;
  grid-column: 1;
  grid-row: 2;
  overflow: hidden;
`;
const TimeLabel = styled.span`
  flex: none;
  width: 64px;
  white-space: nowrap;
  line-height: 13px;
  &::before {
    content: "";
    display: block;
    width: 1px;
    height: 3px;
    margin-left: 1px;
    background: #fff;
  }
`;
const ChartTabBar = styled(TabBar)`
  height: 23px;
  margin-top: 2px;
`;
const TabScroll = styled.span`
  margin: 5px 8px 0 auto;
`;

const TerminalPane = styled.section`
  display: flex;
  height: 285px;
  border-top: 1px solid #fff;
  border-bottom: 1px solid ${colors.shadow};
`;
const TerminalSide = styled.div`
  display: flex;
  flex-direction: column;
  width: 16px;
  padding: 2px 1px 2px 0;
`;
const SideTitle = styled.h2`
  flex: 1;
  width: 14px;
  margin: 4px 0 0 1px;
  background: ${colors.navy};
  color: #fff;
  font-size: 11px;
  font-weight: 400;
  line-height: 13px;
  writing-mode: vertical-rl;
  transform: rotate(180deg);
  padding-top: 3px;
`;
const TerminalMain = styled.div`
  flex: 1;
  min-width: 0;
  padding-right: 2px;
`;
const TerminalBody = styled.div`
  display: flex;
  height: 260px;
  overflow: hidden;
  border-top: 1px solid ${colors.shadow};
`;
const OrderTable = styled.table`
  ${tableBase}
  flex: 1;
  align-self: flex-start;
  background: #fff;
  td svg {
    margin: 0 3px 0 0;
  }
`;
const Column = styled.col`
  width: ${(p) => (p.$width ? `${p.$width}px` : "auto")};
`;
const OrderRow = styled.tr`
  background: #fff;
  &:nth-child(even) {
    background: #efebef;
  }
  && {
    ${(p) =>
      p.$selected &&
      css`
        background: ${colors.navy};
        color: #fff;
      `}
  }
`;
const SortMark = styled.span`
  display: inline-block;
  margin-left: 12px;
`;
const ScrollBar = styled.div`
  display: flex;
  flex-direction: column;
  flex: none;
  width: 17px;
`;
const ScrollButton = styled.button`
  ${raised}
  display: flex;
  align-items: center;
  justify-content: center;
  height: 17px;
`;
const ScrollTrack = styled.div`
  flex: 1;
  padding-top: 20px;
  ${checker}
`;
const ScrollThumb = styled.div`
  ${raised}
  height: 8px;
`;
const Count = styled.sub`
  margin-left: 3px;
  color: #f00;
  font-size: 9px;
  font-weight: 700;
  line-height: 8px;
`;

const Status = styled.footer`
  display: flex;
  height: 23px;
  padding: 4px 0 0;
  border-top: 1px solid #fff;
  line-height: 18px;
`;
const Help = styled.span`
  flex: 1;
  padding-left: 1px;
`;
const StatusCell = styled.span`
  display: flex;
  align-items: center;
  gap: 3px;
  width: ${(p) => p.$width}px;
  padding-left: 3px;
  border-left: 1px solid ${colors.shadow};
  white-space: nowrap;
`;
